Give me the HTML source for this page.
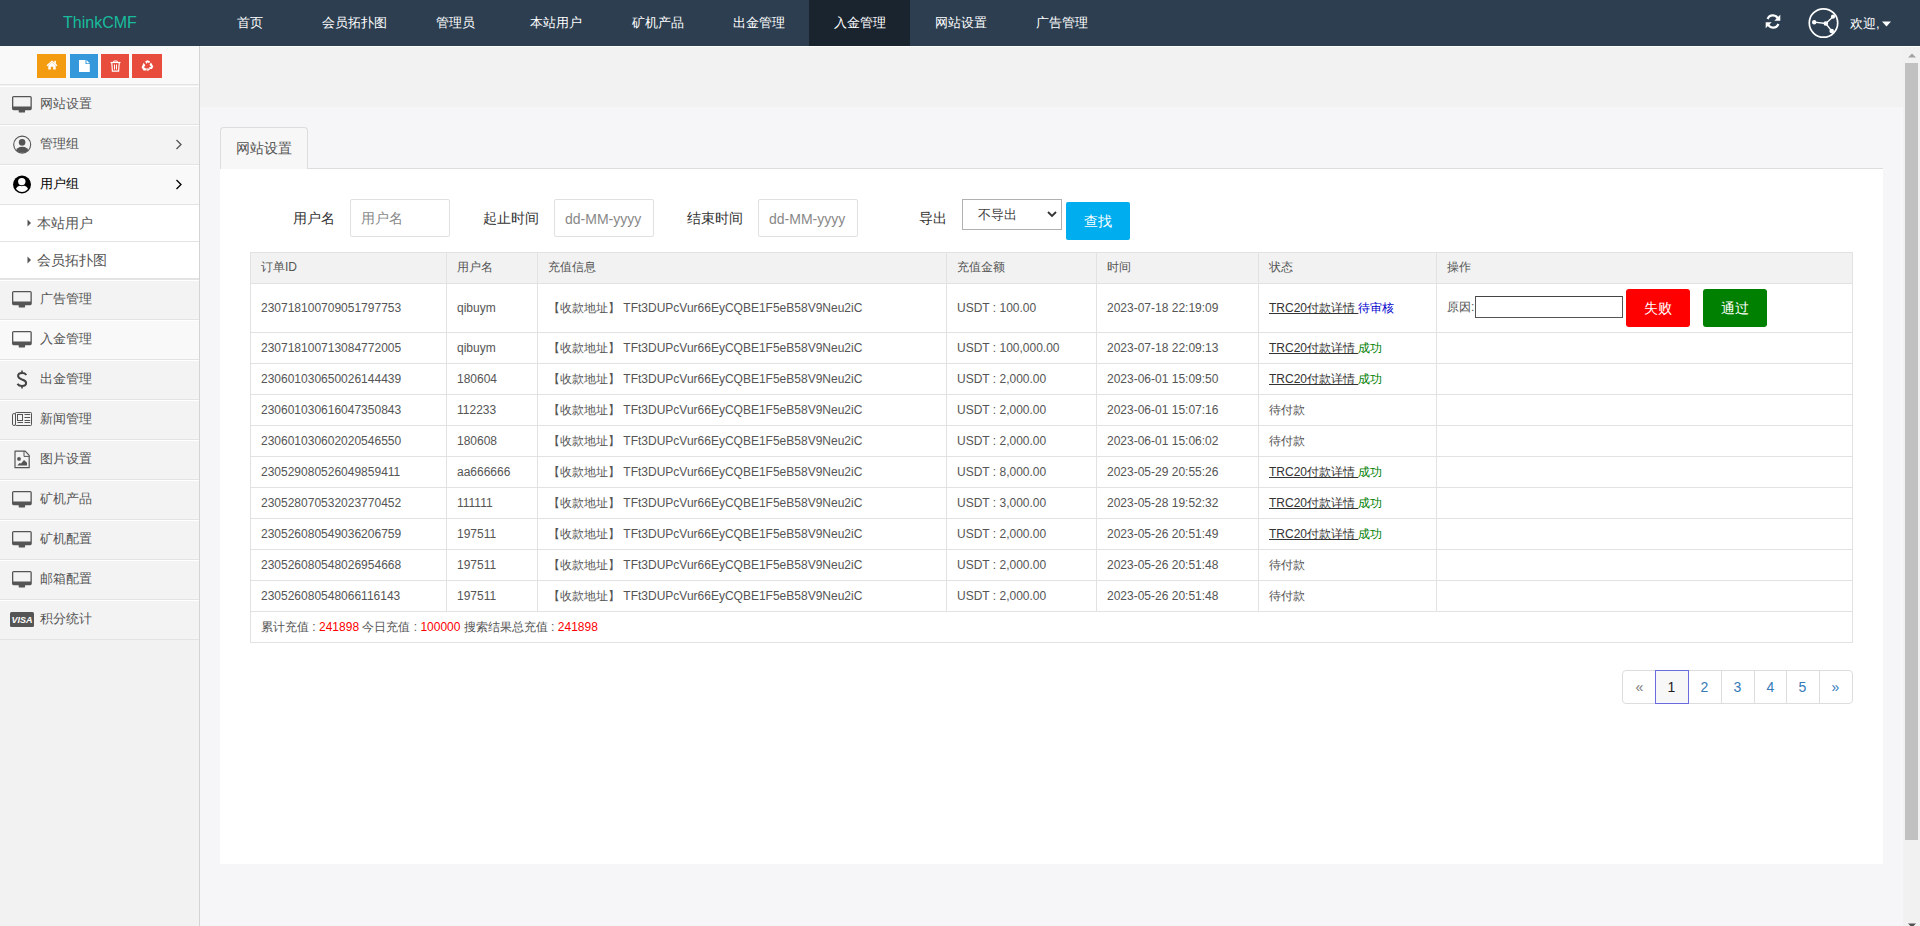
<!DOCTYPE html><html><head><meta charset="utf-8"><style>
*{box-sizing:border-box;margin:0;padding:0}
html,body{width:1920px;height:926px;overflow:hidden}
body{font-family:"Liberation Sans",sans-serif;background:#f6f6f8;position:relative;color:#555}
#top{position:absolute;left:0;top:0;width:1920px;height:46px;background:#2c3e50}
.nav{position:absolute;top:0;height:46px;line-height:46px;color:#fff;font-size:13px;white-space:nowrap}
#logo{position:absolute;left:63px;top:0;height:46px;line-height:45px;color:#18bc9c;font-size:16px}
#act{position:absolute;left:809px;top:0;width:101px;height:46px;background:#1a242f}
#side{position:absolute;left:0;top:46px;width:200px;height:880px;background:#f2f2f2;border-right:1px solid #d4d4d4}
#scbar{position:absolute;left:0;top:0;width:199px;height:39px;background:#f9f9f9;border-bottom:1px solid #e3e3e3}
.sc{position:absolute;top:8px;height:24px}
.mi{position:absolute;left:0;width:199px;background:#f3f3f3;border-bottom:1px solid #e3e3e3;box-shadow:inset 0 1px 0 #fff}
.mi.on{background:#f9f9f9}
.mi.bt{border-top:1px solid #e3e3e3}
.mi.sub{background:#fff}
.mi .t{position:absolute;left:40px;top:-1px;font-size:13px;color:#555;white-space:nowrap}
.mi.sub .t{left:37px;top:0;font-size:14px}
.mi svg{position:absolute}
#hdr{position:absolute;left:200px;top:47px;width:1703px;height:60px;background:#f2f2f2}
#tab{position:absolute;left:220px;top:127px;width:88px;height:42px;background:#f7f7f7;border:1px solid #ddd;border-bottom:none;border-radius:4px 4px 0 0}
#tab span{position:absolute;left:15px;top:0;line-height:40px;font-size:14px;color:#555}
#panel{position:absolute;left:220px;top:169px;width:1663px;height:695px;background:#fff}
.lbl{position:absolute;font-size:14px;color:#333;white-space:nowrap;line-height:16px}
.inp{position:absolute;top:199px;width:100px;height:38px;border:1px solid #e0e0e0;border-radius:2px;background:#fff}
.ph{position:absolute;font-size:14px;color:#888;white-space:nowrap;line-height:16px}
.cell{position:absolute;font-size:12px;color:#555;white-space:nowrap;line-height:14px}
.hl{position:absolute;height:1px;background:#e2e2e2}
.vl{position:absolute;width:1px;background:#e2e2e2}
#sb{position:absolute;left:1903px;top:46px;width:17px;height:880px;background:#f1f1f1}
</style></head><body>
<div id="hdr"></div>
<div id="top"><div id="logo">ThinkCMF</div><div id="act"></div>
<div class="nav" style="left:237px">首页</div>
<div class="nav" style="left:322px">会员拓扑图</div>
<div class="nav" style="left:436px">管理员</div>
<div class="nav" style="left:530px">本站用户</div>
<div class="nav" style="left:632px">矿机产品</div>
<div class="nav" style="left:733px">出金管理</div>
<div class="nav" style="left:834px">入金管理</div>
<div class="nav" style="left:935px">网站设置</div>
<div class="nav" style="left:1036px">广告管理</div>
</div>
<div id="side"><div id="scbar"><div class="sc" style="left:37px;width:29px;background:#f39c12"><svg style="position:absolute;left:9px;top:6px" width="12" height="10" viewBox="0 0 12 10"><path d="M6 0.5 L11.5 5.3 L10.6 6.2 L6 2.3 L1.4 6.2 L0.5 5.3 Z" fill="#fff"/><rect x="8.3" y="0.8" width="1.6" height="3" fill="#fff"/><path d="M2.3 5.5 L6 2.6 L9.7 5.5 V9.5 H7.2 V6.8 H4.8 V9.5 H2.3 Z" fill="#fff"/></svg></div><div class="sc" style="left:70px;width:28px;background:#3498db"><svg style="position:absolute;left:9px;top:6px" width="11" height="12" viewBox="0 0 11 12"><path d="M0 0 H6.5 V4 H10.8 V12 H0 Z" fill="#fff"/><path d="M7.5 0 L10.8 3.2 H7.5 Z" fill="#fff"/></svg></div><div class="sc" style="left:101px;width:28px;background:#e74c3c"><svg style="position:absolute;left:9px;top:6px" width="11" height="12" viewBox="0 0 11 12"><path d="M0.5 2.5 H10.5" stroke="#fff" stroke-width="1.2"/><path d="M3.8 2.3 V1 H7.2 V2.3" fill="none" stroke="#fff" stroke-width="1"/><path d="M1.8 3 L2.4 11.2 H8.6 L9.2 3" fill="none" stroke="#fff" stroke-width="1.2"/><path d="M4.5 4.5 V9.5 M6.5 4.5 V9.5" stroke="#fff" stroke-width="1"/></svg></div><div class="sc" style="left:132px;width:30px;background:#e74c3c"><svg style="position:absolute;left:9px;top:6px" width="13" height="12" viewBox="0 0 13 12"><path d="M4.2 1.2 L6.5 0.3 L9.2 1.5 L8 3.3 L6.5 2.2 L5.3 4 Z" fill="#fff"/><path d="M10 2.5 L12.3 6.5 L11 9 L8.3 9 L8.3 7 L10 7 L8.5 4.4 Z" fill="#fff"/><path d="M2.6 2.8 L4.4 5.6 L3 7 L4 8.3 L5.6 8.3 V10.5 L2.5 10.5 L0.6 7.2 Z" fill="#fff"/><path d="M6.3 8 L9.2 9.3 L6.3 11.2 Z" fill="#fff"/></svg></div></div><div class="mi " style="top:40px;height:39px"><div class="t" style="line-height:38px;color:#555">网站设置</div><svg style="left:12px;top:10px" width="20" height="17" viewBox="0 0 20 17"><path fill-rule="evenodd" d="M1.6 0 H18.2 Q19.8 0 19.8 1.6 V12.6 Q19.8 14.2 18.2 14.2 H1.6 Q0 14.2 0 12.6 V1.6 Q0 0 1.6 0 Z M1.3 1.2 V10.6 H18.5 V1.2 Z" fill="#555"/><path d="M6.6 14 H13.2 L12.9 16.6 H6.9 Z" fill="#555"/></svg></div><div class="mi " style="top:79px;height:40px"><div class="t" style="line-height:39px;color:#555">管理组</div><svg style="left:13px;top:10px" width="20" height="20" viewBox="0 0 20 20"><defs><clipPath id="cu1"><circle cx="9.2" cy="9.6" r="8.2"/></clipPath></defs><circle cx="9.2" cy="9.6" r="8.5" fill="none" stroke="#555" stroke-width="1.1"/><circle cx="9.1" cy="7.3" r="3.4" fill="#555"/><ellipse cx="9.2" cy="17.2" rx="6.6" ry="5.6" fill="#555" clip-path="url(#cu1)"/><circle cx="9.1" cy="7.3" r="4.1" fill="none" stroke="#f3f3f3" stroke-width="0.7"/></svg><svg style="left:175px;top:14px" width="8" height="11" viewBox="0 0 8 11"><path d="M1.5 1 L6 5.5 L1.5 10" fill="none" stroke="#555" stroke-width="1.3"/></svg></div><div class="mi on" style="top:119px;height:40px"><div class="t" style="line-height:39px;color:#000">用户组</div><svg style="left:13px;top:10px" width="20" height="20" viewBox="0 0 20 20"><defs><clipPath id="cu2"><circle cx="9" cy="9.5" r="7.4"/></clipPath></defs><circle cx="9" cy="9.5" r="9" fill="#000"/><ellipse cx="9" cy="15.8" rx="6.4" ry="5.6" fill="#fff" clip-path="url(#cu2)"/><circle cx="8.8" cy="6.6" r="4.6" fill="#000"/><circle cx="8.8" cy="6.6" r="3.7" fill="#fff"/></svg><svg style="left:175px;top:14px" width="8" height="11" viewBox="0 0 8 11"><path d="M1.5 1 L6 5.5 L1.5 10" fill="none" stroke="#000" stroke-width="1.3"/></svg></div><div class="mi sub" style="top:159px;height:37px"><div class="t" style="line-height:36px;color:#555">本站用户</div><svg style="left:27px;top:14px" width="5" height="8" viewBox="0 0 5 8"><path d="M0.5 0.5 L4 4 L0.5 7.5 Z" fill="#555"/></svg></div><div class="mi sub" style="top:196px;height:37px"><div class="t" style="line-height:36px;color:#555">会员拓扑图</div><svg style="left:27px;top:14px" width="5" height="8" viewBox="0 0 5 8"><path d="M0.5 0.5 L4 4 L0.5 7.5 Z" fill="#555"/></svg></div><div class="mi bt" style="top:233px;height:41px"><div class="t" style="line-height:39px;color:#555">广告管理</div><svg style="left:12px;top:11px" width="20" height="17" viewBox="0 0 20 17"><path fill-rule="evenodd" d="M1.6 0 H18.2 Q19.8 0 19.8 1.6 V12.6 Q19.8 14.2 18.2 14.2 H1.6 Q0 14.2 0 12.6 V1.6 Q0 0 1.6 0 Z M1.3 1.2 V10.6 H18.5 V1.2 Z" fill="#555"/><path d="M6.6 14 H13.2 L12.9 16.6 H6.9 Z" fill="#555"/></svg></div><div class="mi on" style="top:274px;height:40px"><div class="t" style="line-height:39px;color:#555">入金管理</div><svg style="left:12px;top:11px" width="20" height="17" viewBox="0 0 20 17"><path fill-rule="evenodd" d="M1.6 0 H18.2 Q19.8 0 19.8 1.6 V12.6 Q19.8 14.2 18.2 14.2 H1.6 Q0 14.2 0 12.6 V1.6 Q0 0 1.6 0 Z M1.3 1.2 V10.6 H18.5 V1.2 Z" fill="#555"/><path d="M6.6 14 H13.2 L12.9 16.6 H6.9 Z" fill="#555"/></svg></div><div class="mi " style="top:314px;height:40px"><div class="t" style="line-height:39px;color:#555">出金管理</div><svg style="left:16px;top:10px" width="12" height="19" viewBox="0 0 12 19"><path d="M6 0.5 V3.2 M6 15.8 V18.5" stroke="#444" stroke-width="1.6"/><path d="M10.3 5 C9.5 3.8 8 3.1 6 3.1 C3.6 3.1 2.1 4.3 2.1 6.1 C2.1 8.1 3.9 8.8 6 9.5 C8.4 10.2 10.1 11 10.1 13 C10.1 14.9 8.5 15.9 6 15.9 C4 15.9 2.4 15.2 1.4 13.8" fill="none" stroke="#444" stroke-width="2"/></svg></div><div class="mi " style="top:354px;height:40px"><div class="t" style="line-height:39px;color:#555">新闻管理</div><svg style="left:11px;top:11px" width="23" height="16" viewBox="0 0 23 16"><rect x="4.5" y="1.5" width="16" height="13" rx="0.8" fill="none" stroke="#555" stroke-width="1"/><rect x="1.5" y="2.5" width="3" height="12" rx="1.4" fill="none" stroke="#555" stroke-width="1"/><rect x="6.5" y="3.5" width="5" height="6" fill="none" stroke="#555" stroke-width="1"/><path d="M13.5 3.5 H19.2 M13.5 6.5 H19.2 M13.5 9.5 H19.2 M13.5 11.5 H19.2 M6.5 11.5 H12" stroke="#555" stroke-width="1"/></svg></div><div class="mi " style="top:394px;height:40px"><div class="t" style="line-height:39px;color:#555">图片设置</div><svg style="left:14px;top:10px" width="17" height="19" viewBox="0 0 17 19"><path d="M1 1.2 H11.2 L15.2 5.4 V17.7 H1 Z" fill="none" stroke="#555" stroke-width="1.2" stroke-linejoin="round"/><path d="M10 1.2 V6.4 H15.2" fill="none" stroke="#555" stroke-width="1"/><circle cx="5" cy="8.9" r="1.9" fill="#555"/><path d="M3.2 15.6 L5.6 12.9 L7 13.6 L10 10 L13 12.7 V15.6 Z" fill="#555"/></svg></div><div class="mi " style="top:434px;height:40px"><div class="t" style="line-height:39px;color:#555">矿机产品</div><svg style="left:12px;top:11px" width="20" height="17" viewBox="0 0 20 17"><path fill-rule="evenodd" d="M1.6 0 H18.2 Q19.8 0 19.8 1.6 V12.6 Q19.8 14.2 18.2 14.2 H1.6 Q0 14.2 0 12.6 V1.6 Q0 0 1.6 0 Z M1.3 1.2 V10.6 H18.5 V1.2 Z" fill="#555"/><path d="M6.6 14 H13.2 L12.9 16.6 H6.9 Z" fill="#555"/></svg></div><div class="mi " style="top:474px;height:40px"><div class="t" style="line-height:39px;color:#555">矿机配置</div><svg style="left:12px;top:11px" width="20" height="17" viewBox="0 0 20 17"><path fill-rule="evenodd" d="M1.6 0 H18.2 Q19.8 0 19.8 1.6 V12.6 Q19.8 14.2 18.2 14.2 H1.6 Q0 14.2 0 12.6 V1.6 Q0 0 1.6 0 Z M1.3 1.2 V10.6 H18.5 V1.2 Z" fill="#555"/><path d="M6.6 14 H13.2 L12.9 16.6 H6.9 Z" fill="#555"/></svg></div><div class="mi " style="top:514px;height:40px"><div class="t" style="line-height:39px;color:#555">邮箱配置</div><svg style="left:12px;top:11px" width="20" height="17" viewBox="0 0 20 17"><path fill-rule="evenodd" d="M1.6 0 H18.2 Q19.8 0 19.8 1.6 V12.6 Q19.8 14.2 18.2 14.2 H1.6 Q0 14.2 0 12.6 V1.6 Q0 0 1.6 0 Z M1.3 1.2 V10.6 H18.5 V1.2 Z" fill="#555"/><path d="M6.6 14 H13.2 L12.9 16.6 H6.9 Z" fill="#555"/></svg></div><div class="mi " style="top:554px;height:40px"><div class="t" style="line-height:39px;color:#555">积分统计</div><svg style="left:10px;top:12px" width="24" height="15" viewBox="0 0 24 15"><rect x="0" y="0" width="24" height="15" rx="1.5" fill="#555"/><text x="12" y="11" text-anchor="middle" font-family="Liberation Sans" font-weight="bold" font-style="italic" font-size="9" fill="#fff">VISA</text></svg></div></div>
<div id="tab"><span>网站设置</span></div>
<div id="panel"></div><div style="position:absolute;left:307px;top:168px;width:1576px;height:1px;background:#ddd"></div>
<div class="lbl" style="left:293px;top:210px">用户名</div><div class="inp" style="left:350px"></div><div class="ph" style="left:361px;top:210px">用户名</div><div class="lbl" style="left:483px;top:210px">起止时间</div><div class="inp" style="left:554px"></div><div class="ph" style="left:565px;top:211px">dd-MM-yyyy</div><div class="lbl" style="left:687px;top:210px">结束时间</div><div class="inp" style="left:758px"></div><div class="ph" style="left:769px;top:211px">dd-MM-yyyy</div><div class="lbl" style="left:919px;top:210px">导出</div><div id="sel" style="position:absolute;left:962px;top:199px;width:100px;height:31px;border:1px solid #b0b0b0;border-radius:0;background:#fff"><span style="position:absolute;left:15px;top:7px;font-size:13px;line-height:15px;color:#444">不导出</span><svg style="position:absolute;left:84px;top:11px" width="10" height="7" viewBox="0 0 10 7"><path d="M1 1 L5 5 L9 1" fill="none" stroke="#333" stroke-width="1.8"/></svg></div><div style="position:absolute;left:1066px;top:202px;width:64px;height:38px;background:#00aeef;border-radius:2px;color:#fff;font-size:14px;line-height:38px;text-align:center">查找</div>
<div style="position:absolute;left:250px;top:252px;width:1603px;height:31px;background:#f2f2f2"></div><div class="hl" style="left:250px;top:252px;width:1603px"></div><div class="hl" style="left:250px;top:283px;width:1603px"></div><div class="hl" style="left:250px;top:332px;width:1603px"></div><div class="hl" style="left:250px;top:363px;width:1603px"></div><div class="hl" style="left:250px;top:394px;width:1603px"></div><div class="hl" style="left:250px;top:425px;width:1603px"></div><div class="hl" style="left:250px;top:456px;width:1603px"></div><div class="hl" style="left:250px;top:487px;width:1603px"></div><div class="hl" style="left:250px;top:518px;width:1603px"></div><div class="hl" style="left:250px;top:549px;width:1603px"></div><div class="hl" style="left:250px;top:580px;width:1603px"></div><div class="hl" style="left:250px;top:611px;width:1603px"></div><div class="hl" style="left:250px;top:642px;width:1603px"></div><div class="vl" style="left:250px;top:252px;height:391px"></div><div class="vl" style="left:446px;top:252px;height:360px"></div><div class="vl" style="left:537px;top:252px;height:360px"></div><div class="vl" style="left:946px;top:252px;height:360px"></div><div class="vl" style="left:1096px;top:252px;height:360px"></div><div class="vl" style="left:1258px;top:252px;height:360px"></div><div class="vl" style="left:1436px;top:252px;height:360px"></div><div class="vl" style="left:1852px;top:252px;height:391px"></div><div class="cell" style="left:261px;top:260px">订单ID</div><div class="cell" style="left:457px;top:260px">用户名</div><div class="cell" style="left:548px;top:260px">充值信息</div><div class="cell" style="left:957px;top:260px">充值金额</div><div class="cell" style="left:1107px;top:260px">时间</div><div class="cell" style="left:1269px;top:260px">状态</div><div class="cell" style="left:1447px;top:260px">操作</div><div class="cell" style="left:261px;top:301px">230718100709051797753</div><div class="cell" style="left:457px;top:301px">qibuym</div><div class="cell" style="left:548px;top:301px">【收款地址】 TFt3DUPcVur66EyCQBE1F5eB58V9Neu2iC</div><div class="cell" style="left:957px;top:301px">USDT : 100.00</div><div class="cell" style="left:1107px;top:301px">2023-07-18 22:19:09</div><div class="cell" style="left:1269px;top:301px"><span style="color:#333;text-decoration:underline">TRC20付款详情 </span><span style="color:#0000cd">待审核</span></div><div class="cell" style="left:261px;top:341px">230718100713084772005</div><div class="cell" style="left:457px;top:341px">qibuym</div><div class="cell" style="left:548px;top:341px">【收款地址】 TFt3DUPcVur66EyCQBE1F5eB58V9Neu2iC</div><div class="cell" style="left:957px;top:341px">USDT : 100,000.00</div><div class="cell" style="left:1107px;top:341px">2023-07-18 22:09:13</div><div class="cell" style="left:1269px;top:341px"><span style="color:#333;text-decoration:underline">TRC20付款详情 </span><span style="color:#008000">成功</span></div><div class="cell" style="left:261px;top:372px">230601030650026144439</div><div class="cell" style="left:457px;top:372px">180604</div><div class="cell" style="left:548px;top:372px">【收款地址】 TFt3DUPcVur66EyCQBE1F5eB58V9Neu2iC</div><div class="cell" style="left:957px;top:372px">USDT : 2,000.00</div><div class="cell" style="left:1107px;top:372px">2023-06-01 15:09:50</div><div class="cell" style="left:1269px;top:372px"><span style="color:#333;text-decoration:underline">TRC20付款详情 </span><span style="color:#008000">成功</span></div><div class="cell" style="left:261px;top:403px">230601030616047350843</div><div class="cell" style="left:457px;top:403px">112233</div><div class="cell" style="left:548px;top:403px">【收款地址】 TFt3DUPcVur66EyCQBE1F5eB58V9Neu2iC</div><div class="cell" style="left:957px;top:403px">USDT : 2,000.00</div><div class="cell" style="left:1107px;top:403px">2023-06-01 15:07:16</div><div class="cell" style="left:1269px;top:403px">待付款</div><div class="cell" style="left:261px;top:434px">230601030602020546550</div><div class="cell" style="left:457px;top:434px">180608</div><div class="cell" style="left:548px;top:434px">【收款地址】 TFt3DUPcVur66EyCQBE1F5eB58V9Neu2iC</div><div class="cell" style="left:957px;top:434px">USDT : 2,000.00</div><div class="cell" style="left:1107px;top:434px">2023-06-01 15:06:02</div><div class="cell" style="left:1269px;top:434px">待付款</div><div class="cell" style="left:261px;top:465px">230529080526049859411</div><div class="cell" style="left:457px;top:465px">aa666666</div><div class="cell" style="left:548px;top:465px">【收款地址】 TFt3DUPcVur66EyCQBE1F5eB58V9Neu2iC</div><div class="cell" style="left:957px;top:465px">USDT : 8,000.00</div><div class="cell" style="left:1107px;top:465px">2023-05-29 20:55:26</div><div class="cell" style="left:1269px;top:465px"><span style="color:#333;text-decoration:underline">TRC20付款详情 </span><span style="color:#008000">成功</span></div><div class="cell" style="left:261px;top:496px">230528070532023770452</div><div class="cell" style="left:457px;top:496px">111111</div><div class="cell" style="left:548px;top:496px">【收款地址】 TFt3DUPcVur66EyCQBE1F5eB58V9Neu2iC</div><div class="cell" style="left:957px;top:496px">USDT : 3,000.00</div><div class="cell" style="left:1107px;top:496px">2023-05-28 19:52:32</div><div class="cell" style="left:1269px;top:496px"><span style="color:#333;text-decoration:underline">TRC20付款详情 </span><span style="color:#008000">成功</span></div><div class="cell" style="left:261px;top:527px">230526080549036206759</div><div class="cell" style="left:457px;top:527px">197511</div><div class="cell" style="left:548px;top:527px">【收款地址】 TFt3DUPcVur66EyCQBE1F5eB58V9Neu2iC</div><div class="cell" style="left:957px;top:527px">USDT : 2,000.00</div><div class="cell" style="left:1107px;top:527px">2023-05-26 20:51:49</div><div class="cell" style="left:1269px;top:527px"><span style="color:#333;text-decoration:underline">TRC20付款详情 </span><span style="color:#008000">成功</span></div><div class="cell" style="left:261px;top:558px">230526080548026954668</div><div class="cell" style="left:457px;top:558px">197511</div><div class="cell" style="left:548px;top:558px">【收款地址】 TFt3DUPcVur66EyCQBE1F5eB58V9Neu2iC</div><div class="cell" style="left:957px;top:558px">USDT : 2,000.00</div><div class="cell" style="left:1107px;top:558px">2023-05-26 20:51:48</div><div class="cell" style="left:1269px;top:558px">待付款</div><div class="cell" style="left:261px;top:589px">230526080548066116143</div><div class="cell" style="left:457px;top:589px">197511</div><div class="cell" style="left:548px;top:589px">【收款地址】 TFt3DUPcVur66EyCQBE1F5eB58V9Neu2iC</div><div class="cell" style="left:957px;top:589px">USDT : 2,000.00</div><div class="cell" style="left:1107px;top:589px">2023-05-26 20:51:48</div><div class="cell" style="left:1269px;top:589px">待付款</div><div class="cell" style="left:1447px;top:300px">原因:</div><div style="position:absolute;left:1475px;top:296px;width:148px;height:22px;border:1px solid #555;border-top-color:#444;background:#fff"></div><div style="position:absolute;left:1626px;top:289px;width:64px;height:38px;background:#f00;border-radius:3px;color:#fff;font-size:14px;line-height:38px;text-align:center">失败</div><div style="position:absolute;left:1703px;top:289px;width:64px;height:38px;background:#008000;border-radius:3px;color:#fff;font-size:14px;line-height:38px;text-align:center">通过</div><div class="cell" style="left:261px;top:620px">累计充值 : <span style="color:#f00">241898</span> 今日充值 : <span style="color:#f00">100000</span> 搜索结果总充值 : <span style="color:#f00">241898</span></div>
<div style="position:absolute;left:1622px;top:670px;width:231px;height:34px;border:1px solid #ddd;border-radius:4px;background:#fff"></div><div class="vl" style="left:1655px;top:670px;height:34px;background:#ddd"></div><div class="vl" style="left:1688px;top:670px;height:34px;background:#ddd"></div><div class="vl" style="left:1721px;top:670px;height:34px;background:#ddd"></div><div class="vl" style="left:1754px;top:670px;height:34px;background:#ddd"></div><div class="vl" style="left:1786px;top:670px;height:34px;background:#ddd"></div><div class="vl" style="left:1819px;top:670px;height:34px;background:#ddd"></div><div style="position:absolute;left:1655px;top:670px;width:34px;height:34px;border:1px solid #6b6be0;background:#f7f7f7"></div><div style="position:absolute;left:1623px;top:670px;width:33px;height:34px;line-height:34px;text-align:center;font-size:14px;color:#777">«</div><div style="position:absolute;left:1655px;top:670px;width:33px;height:34px;line-height:34px;text-align:center;font-size:14px;color:#222">1</div><div style="position:absolute;left:1688px;top:670px;width:33px;height:34px;line-height:34px;text-align:center;font-size:14px;color:#337ab7">2</div><div style="position:absolute;left:1721px;top:670px;width:33px;height:34px;line-height:34px;text-align:center;font-size:14px;color:#337ab7">3</div><div style="position:absolute;left:1754px;top:670px;width:33px;height:34px;line-height:34px;text-align:center;font-size:14px;color:#337ab7">4</div><div style="position:absolute;left:1786px;top:670px;width:33px;height:34px;line-height:34px;text-align:center;font-size:14px;color:#337ab7">5</div><div style="position:absolute;left:1819px;top:670px;width:33px;height:34px;line-height:34px;text-align:center;font-size:14px;color:#337ab7">»</div>
<svg style="position:absolute;left:1765px;top:14px" width="16" height="15" viewBox="0 0 16 15"><path d="M13.2 5.5 A5.6 5.6 0 0 0 2.6 5" fill="none" stroke="#fff" stroke-width="2.2"/><path d="M15.3 0.8 V6.8 H9.3 Z" fill="#fff"/><path d="M2.8 9.5 A5.6 5.6 0 0 0 13.4 10" fill="none" stroke="#fff" stroke-width="2.2"/><path d="M0.7 14.2 V8.2 H6.7 Z" fill="#fff"/></svg><svg style="position:absolute;left:1808px;top:7px" width="32" height="32" viewBox="0 -0.5 32 32"><circle cx="15.5" cy="15.5" r="14.2" fill="none" stroke="#fff" stroke-width="1.7"/><path d="M6.2 14.7 L17.8 16 L25 9.2 M17.8 16 L23.7 23.5" stroke="#fff" stroke-width="1.3" fill="none"/><circle cx="6.2" cy="14.7" r="2.2" fill="#fff"/><circle cx="17.8" cy="16" r="2.3" fill="#fff"/><circle cx="25" cy="9.2" r="2.1" fill="#fff"/><circle cx="23.7" cy="23.5" r="2.3" fill="#fff"/></svg><div style="position:absolute;left:1850px;top:1px;height:46px;line-height:46px;color:#fff;font-size:13px">欢迎,</div><svg style="position:absolute;left:1882px;top:21px" width="9" height="6" viewBox="0 0 9 6"><path d="M0 0.5 H9 L4.5 5.5 Z" fill="#fff"/></svg>
<div id="sb"><svg style="position:absolute;left:5px;top:7px" width="8" height="5" viewBox="0 0 8 5"><path d="M0 4.5 L4 0.5 L8 4.5 Z" fill="#a3a3a3"/></svg><div style="position:absolute;left:2px;top:17px;width:13px;height:777px;background:#c1c1c1"></div><svg style="position:absolute;left:5px;top:877px" width="8" height="5" viewBox="0 0 8 5"><path d="M0 0.5 H8 L4 4.5 Z" fill="#505050"/></svg></div>
<div style="position:absolute;left:200px;top:46px;width:1720px;height:1px;background:#fff"></div>
</body></html>
